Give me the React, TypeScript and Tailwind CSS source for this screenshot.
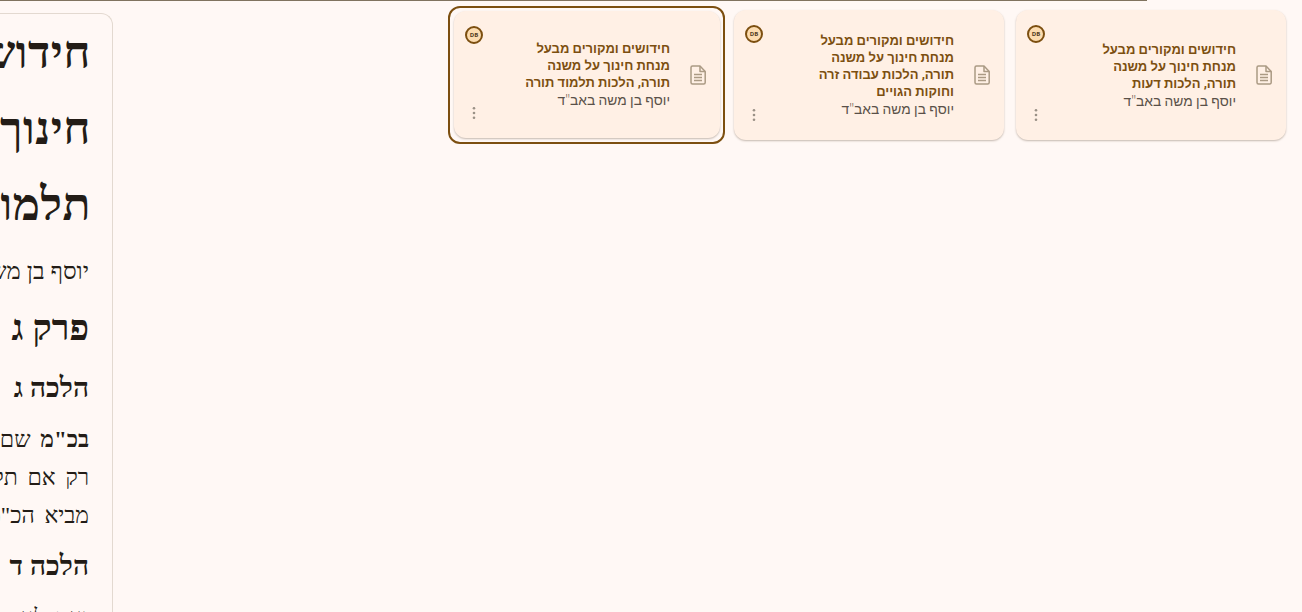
const cards = [
  { title: "חידושים ומקורים מבעל מנחת חינוך על משנה תורה, הלכות תלמוד תורה", selected: true },
  { title: "חידושים ומקורים מבעל מנחת חינוך על משנה תורה, הלכות עבודה זרה וחוקות הגויים", selected: false },
  { title: "חידושים ומקורים מבעל מנחת חינוך על משנה תורה, הלכות דעות", selected: false },
];

function DocIcon() {
  return (
    <svg viewBox="0 0 16 20" className="w-[16px] h-[20px] shrink-0" fill="none" stroke="#ab9a84" strokeWidth="1.5" strokeLinejoin="round">
      <path d="M2.5 1H10L15.2 6.4V17.5a1.5 1.5 0 0 1-1.5 1.5H2.5A1.5 1.5 0 0 1 1 17.5V2.5A1.5 1.5 0 0 1 2.5 1Z" />
      <path d="M10 1V6.4H15.2" />
      <path d="M4 9.5H12M4 12.5H12M4 15.5H12" />
    </svg>
  );
}

function Card({ title, small }: { title: string; small?: boolean }) {
  return (
    <div className={`flex items-center justify-between rounded-[12px] bg-[#fff0e5] shadow-[0_1px_2px_rgba(90,70,50,0.35)] pl-[11px] pr-[14px] pt-[15px] pb-[18px] ${small ? "w-[266px] h-[127px]" : "w-[270px] h-[130px]"}`}>
      <div className="flex flex-col justify-between items-center self-stretch w-[18px]">
        <div className="w-[18px] h-[18px] rounded-full border-2 border-[#7c4f10] bg-[#fcdcb0] flex items-center justify-center text-[6px] font-bold text-[#4f3a1c] [font-family:'Open_Sans',sans-serif]">DB</div>
        <svg viewBox="0 0 4 14" className="w-[4px] h-[14px]" fill="#9a9186">
          <circle cx="2" cy="2.2" r="1.3" />
          <circle cx="2" cy="7" r="1.3" />
          <circle cx="2" cy="11.8" r="1.3" />
        </svg>
      </div>
      <div dir="rtl" className="flex items-center gap-[20px] mt-[3px]">
        <DocIcon />
        <div className="w-[153px] text-[13px] leading-[17px] [font-family:Roboto,sans-serif]">
          <div className="font-bold text-[#7c4f10]">{title}</div>
          <div className="text-[13.8px] text-[#5a5048] font-light">יוסף בן משה באב<span className="[font-family:'Open_Sans',sans-serif]">"</span>ד</div>
        </div>
      </div>
    </div>
  );
}

const serif = "whitespace-nowrap [font-family:'Liberation_Serif',serif] text-[#231c16]";

export default function App() {
  return (
    <div className="relative h-[612px] overflow-hidden bg-[#fff8f5] flex items-start">
      <div className="absolute top-0 left-0 w-[1147px] h-px bg-[#80735f]" />
      <div dir="rtl" className="mt-[13px] w-[113px] h-[640px] shrink-0 overflow-hidden border-r border-t border-[#e3d9d0] rounded-tr-[12px] pr-[23px]">
        <div className={`${serif} font-bold text-[46px] tracking-[0.5px] leading-[76px] mt-[1px] mr-[-2px]`}>
          <div>חידושים ומקורים</div>
          <div>חינוך על משנה</div>
          <div>תלמוד תורה</div>
        </div>
        <div className={`${serif} text-[24px] leading-[28px] mt-[14px]`}>יוסף בן משה באב"ד</div>
        <div className={`${serif} font-bold text-[36px] leading-[40px] mt-[23px]`}>פרק ג</div>
        <div className={`${serif} font-bold text-[28px] leading-[36px] mt-[22px]`}>הלכה ג</div>
        <div className={`${serif} text-[23px] leading-[38px] mt-[15px] [word-spacing:4px]`}>
          <div><b>בכ"מ</b> שם כתב</div>
          <div>רק אם תלמד</div>
          <div>מביא הכ"מ</div>
        </div>
        <div className={`${serif} font-bold text-[28px] leading-[36px] mt-[13px]`}>הלכה ד</div>
        <div className={`${serif} text-[23px] leading-[38px] mt-[15px] [word-spacing:4px]`}>ואם לא תמצא</div>
      </div>
      <div className="flex-1 flex justify-end items-start gap-[12px] pr-[16px] pt-[10px]">
        <div className="mt-[-4px] mr-[-3px] w-[277px] h-[138px] border-2 border-[#7c4f10] rounded-[12px] pl-[4px] pt-[3px]">
          <Card title={cards[0].title} small />
        </div>
        <Card title={cards[1].title} />
        <Card title={cards[2].title} />
      </div>
    </div>
  );
}
